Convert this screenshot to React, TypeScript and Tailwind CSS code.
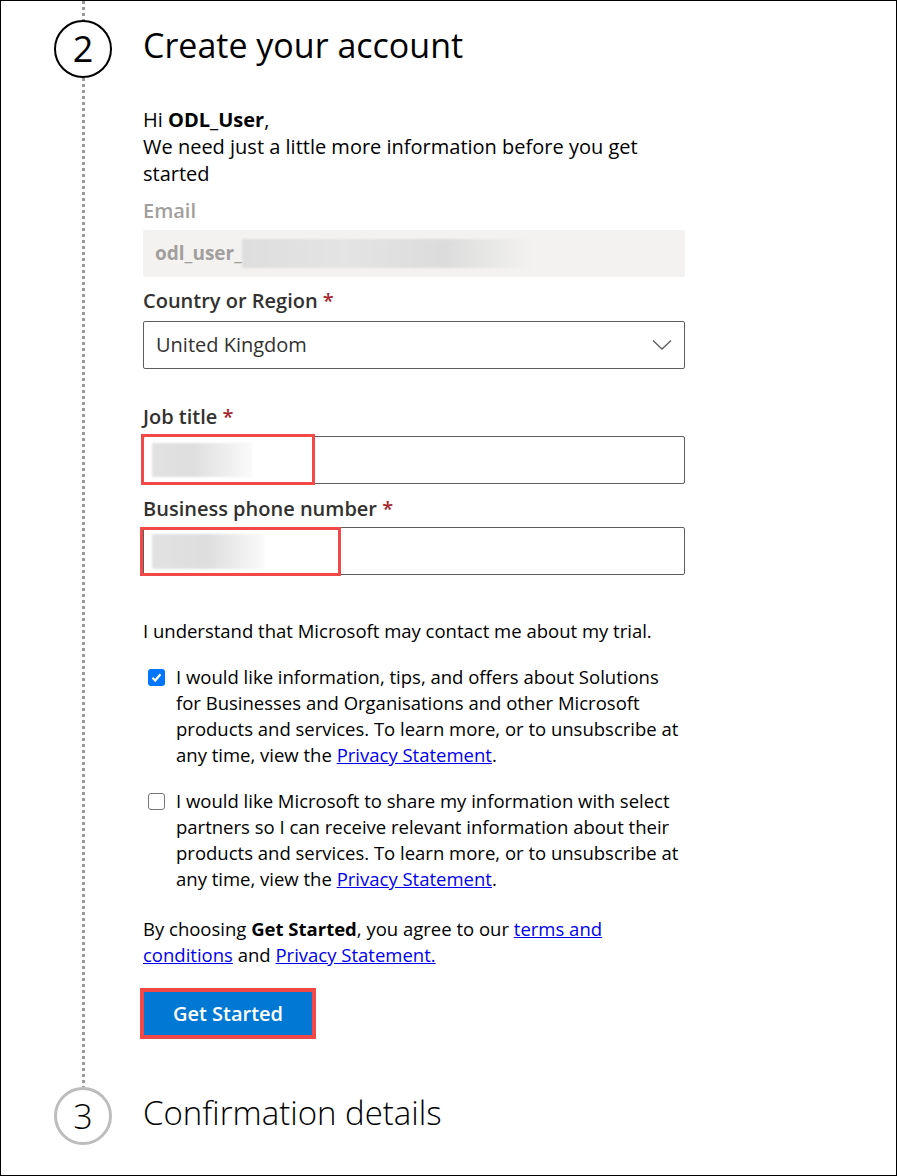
import React from "react";

const font = { fontFamily: "'Open Sans', 'Noto Sans', sans-serif" };

function Required() {
  return <span className="text-[#a4262c]"> *</span>;
}

function CheckBox({ checked }: { checked: boolean }) {
  if (checked) {
    return (
      <div className="mt-[5px] flex h-[17px] w-[17px] shrink-0 items-center justify-center rounded-[3px] bg-[#0075ff]">
        <svg width="13" height="13" viewBox="0 0 13 13">
          <polyline points="2.5,6.8 5.2,9.5 10.5,3.2" fill="none" stroke="#fff" strokeWidth="2.2" />
        </svg>
      </div>
    );
  }
  return <div className="mt-[5px] h-[17px] w-[17px] shrink-0 rounded-[3px] border-[1.5px] border-[#767676] bg-white" />;
}

export default function App() {
  return (
    <div
      className="flex h-[1176px] w-[897px] flex-col border border-black bg-white text-black"
      style={font}
    >
      {/* step 2 */}
      <div className="flex flex-1">
        <div className="w-[142px] shrink-0 pl-[53px]">
          <div className="flex h-full w-[58px] flex-col items-center">
            <div className="h-[19px] w-[3px] bg-[linear-gradient(#9a9a9a_50%,transparent_50%)] bg-[length:3px_6px]" />
            <div className="flex h-[58px] w-[58px] items-center justify-center rounded-full border-2 border-black text-[36px] leading-none">
              2
            </div>
            <div className="w-[3px] flex-1 bg-[linear-gradient(#9a9a9a_50%,transparent_50%)] bg-[length:3px_6px]" />
          </div>
        </div>

        <div className="w-[542px] pt-[20px]">
          <h1 className="text-[34px] leading-[48px]">Create your account</h1>

          <p className="mt-[37px] whitespace-nowrap text-[20px] leading-[27px]">
            Hi <b>ODL_User</b>,<br />
            We need just a little more information before you get
            <br />
            started
          </p>

          <div className="mt-[9px] text-[20px] font-semibold leading-[30px] text-[#a19f9d]">Email</div>
          <div className="mt-[4px] flex h-[47px] items-center rounded-[2px] bg-[#f3f2f1] pl-[12px]">
            <span className="text-[19px] font-bold text-[#a19f9d]">odl_user_</span>
            <div className="h-[29px] w-[290px] bg-[linear-gradient(90deg,#dedede,#e4e4e4_35%,#dcdcdc_70%,#f3f2f1)] blur-[1px]" />
          </div>

          <div className="mt-[9px] text-[20px] font-semibold leading-[30px] text-[#323130]">
            Country or Region
            <Required />
          </div>
          <div className="mt-[5px] flex h-[48px] items-center justify-between rounded-[2px] border border-[#605e5c] pl-[12px] pr-[12px]">
            <span className="text-[20px] text-[#323130]">United Kingdom</span>
            <svg width="20" height="12" viewBox="0 0 20 12">
              <polyline points="1,1.5 10,10 19,1.5" fill="none" stroke="#605e5c" strokeWidth="1.3" />
            </svg>
          </div>

          <div className="mt-[33px] text-[20px] font-semibold leading-[30px] text-[#323130]">
            Job title
            <Required />
          </div>
          <div className="relative mt-[4px] flex h-[48px] items-center rounded-[2px] border border-[#605e5c] pl-[8px]">
            <div className="h-[34px] w-[100px] bg-[linear-gradient(90deg,#e2e2e2,#dedede_40%,#fafafa)] blur-[1px]" />
            <div className="absolute -left-[3px] -top-[3px] h-[51px] w-[174px] border-[3px] border-[#f24848]" />
          </div>

          <div className="mt-[10px] text-[20px] font-semibold leading-[30px] text-[#323130]">
            Business phone number
            <Required />
          </div>
          <div className="relative mt-[3px] flex h-[48px] items-center rounded-[2px] border border-[#605e5c] pl-[8px]">
            <div className="h-[35px] w-[112px] bg-[linear-gradient(90deg,#e2e2e2,#dedede_50%,#fafafa)] blur-[1px]" />
            <div className="absolute -left-[4px] -top-[1px] h-[49px] w-[201px] border-[3px] border-[#f24848]" />
          </div>

          <p className="mt-[42px] whitespace-nowrap text-[18.5px] leading-[27px]">
            I understand that Microsoft may contact me about my trial.
          </p>

          <div className="mt-[20px] flex gap-[11px] pl-[5px]">
            <CheckBox checked />
            <p className="whitespace-nowrap text-[18.5px] leading-[26px]">
              I would like information, tips, and offers about Solutions
              <br />
              for Businesses and Organisations and other Microsoft
              <br />
              products and services. To learn more, or to unsubscribe at
              <br />
              any time, view the{" "}
              <a className="text-[#0000ee] underline" href="#">
                Privacy Statement
              </a>
              .
            </p>
          </div>

          <div className="mt-[20px] flex gap-[11px] pl-[5px]">
            <CheckBox checked={false} />
            <p className="whitespace-nowrap text-[18.5px] leading-[26px]">
              I would like Microsoft to share my information with select
              <br />
              partners so I can receive relevant information about their
              <br />
              products and services. To learn more, or to unsubscribe at
              <br />
              any time, view the{" "}
              <a className="text-[#0000ee] underline" href="#">
                Privacy Statement
              </a>
              .
            </p>
          </div>

          <p className="mt-[24px] whitespace-nowrap text-[18.5px] leading-[26px]">
            By choosing <b>Get Started</b>, you agree to our{" "}
            <a className="text-[#0000ee] underline" href="#">
              terms and
            </a>
            <br />
            <a className="text-[#0000ee] underline" href="#">
              conditions
            </a>{" "}
            and{" "}
            <a className="text-[#0000ee] underline" href="#">
              Privacy Statement.
            </a>
          </p>

          <div className="-ml-[3px] mt-[20px] inline-block border-4 border-[#f24848]">
            <button className="h-[43px] w-[168px] bg-[#0078d4] text-[20px] font-semibold text-white">
              Get Started
            </button>
          </div>
        </div>
      </div>

      {/* step 3 */}
      <div className="flex h-[88px] shrink-0">
        <div className="w-[142px] shrink-0 pl-[53px]">
          <div className="flex h-[58px] w-[58px] items-center justify-center rounded-full border-[3px] border-[#bdbdbd] text-[34px] font-light leading-none">
            3
          </div>
        </div>
        <div className="pt-[2px] text-[33px] font-light leading-[48px]">Confirmation details</div>
      </div>
    </div>
  );
}
